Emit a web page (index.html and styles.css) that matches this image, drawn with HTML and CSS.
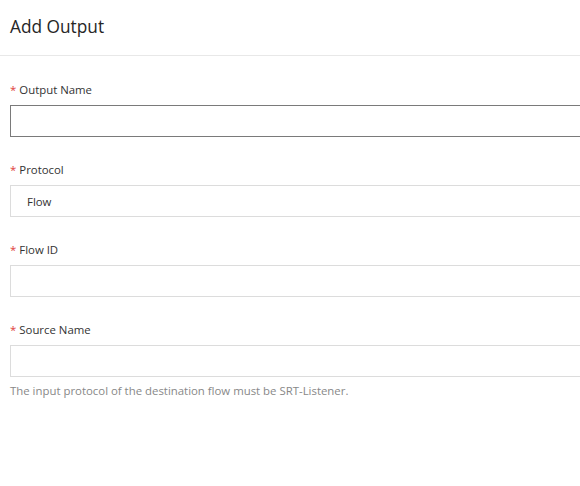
FILE: index.html
```html
<!DOCTYPE html>
<html>
<head>
<meta charset="utf-8">
<link rel="stylesheet" href="styles.css">
</head>
<body>
<div class="panel">
  <div class="header"><h1 class="title">Add Output</h1></div>
  <form class="form">
    <div class="field">
      <label class="label"><span class="req">*</span>Output Name</label>
      <div class="input input-active"></div>
    </div>
    <div class="field">
      <label class="label"><span class="req">*</span>Protocol</label>
      <div class="input"><span class="value">Flow</span></div>
    </div>
    <div class="field">
      <label class="label"><span class="req">*</span>Flow ID</label>
      <div class="input"></div>
    </div>
    <div class="field">
      <label class="label"><span class="req">*</span>Source Name</label>
      <div class="input"></div>
      <div class="help">The input protocol of the destination flow must be SRT-Listener.</div>
    </div>
  </form>
</div>
</body>
</html>
```
FILE: styles.css
```css
html, body {
  margin: 0;
  padding: 0;
  background: #fff;
  overflow: hidden;
}
body {
  font-family: "Open Sans", "Noto Sans", "Liberation Sans", sans-serif;
  color: #333;
}
.panel {
  width: 600px;
}
.header {
  height: 55px;
  border-bottom: 1px solid #e8e8e8;
  padding-left: 10px;
}
.title {
  margin: 0;
  padding-top: 14px;
  font-size: 17.3px;
  font-weight: 400;
  line-height: 26px;
  color: #262626;
}
.form {
  padding: 26px 0 0 10px;
  display: flex;
  flex-direction: column;
  gap: 25px;
}
.field {
  display: flex;
  flex-direction: column;
}
.label {
  font-size: 11.4px;
  line-height: 16px;
  color: #333;
  margin-bottom: 7px;
}
.req {
  color: #e0403a;
  margin-right: 3px;
}
.input {
  height: 32px;
  box-sizing: border-box;
  border: 1px solid #dcdcdc;
  display: flex;
  align-items: center;
  padding-left: 16px;
}
.input-active {
  border-color: #7a7a7a;
}
.value {
  font-size: 11.4px;
  color: #333;
}
.help {
  margin-top: 6px;
  font-size: 11.4px;
  line-height: 16px;
  color: #888;
}
```
